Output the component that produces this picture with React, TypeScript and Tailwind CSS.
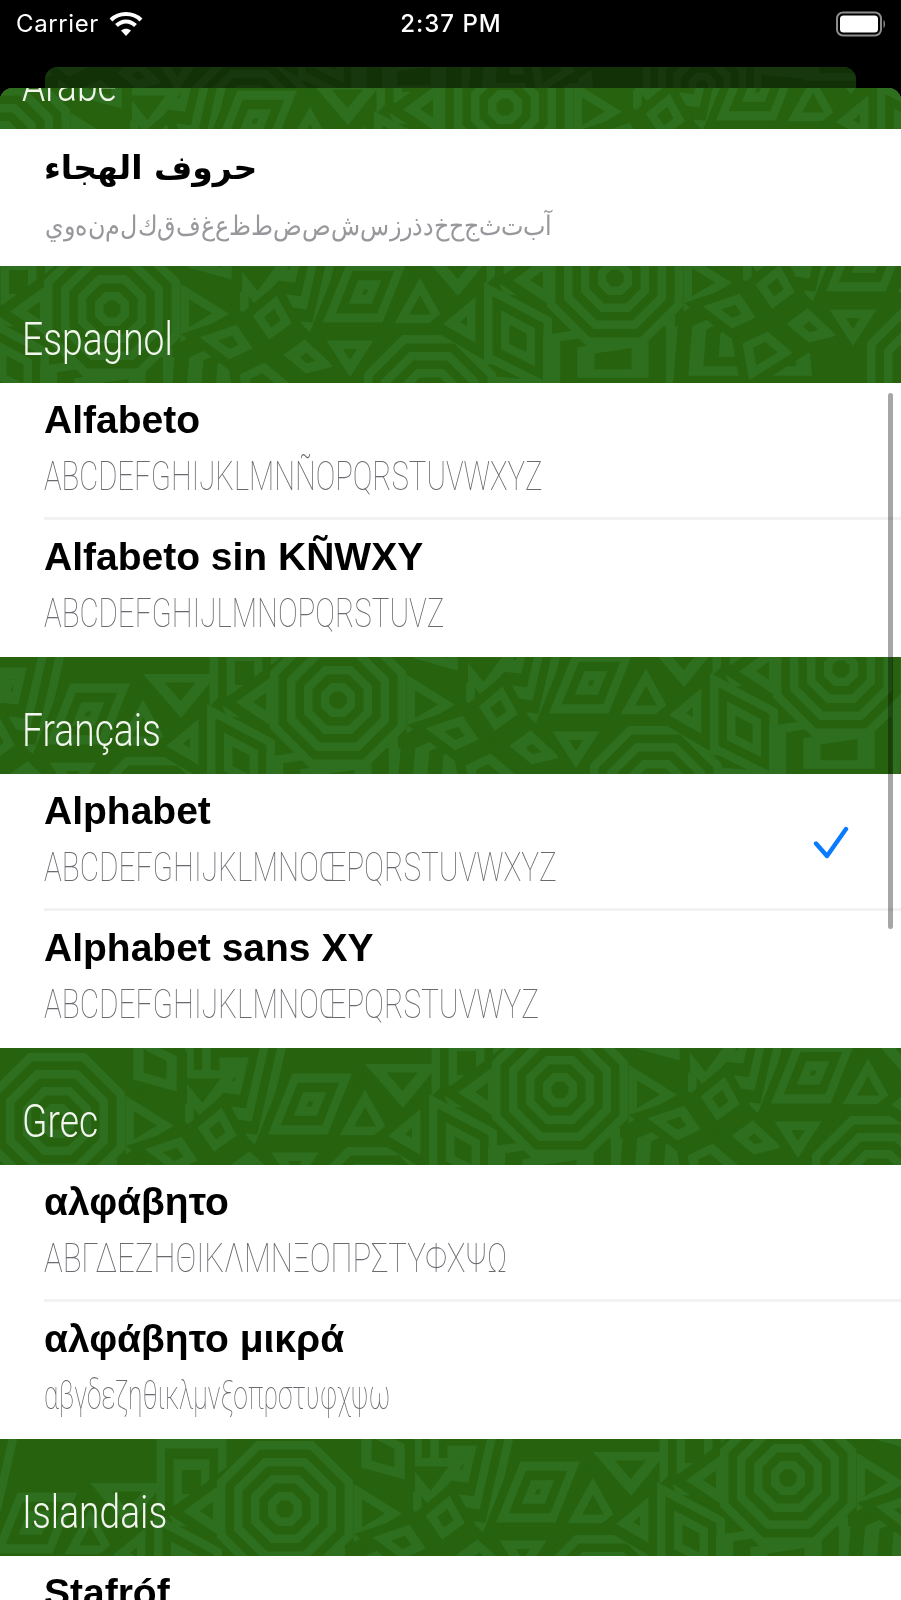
const DARK = "#27620f";
const LIGHT = "#2e6f1f";
const STEP = 8.5;

type Pt = [number, number];

const ARABIC_LETTERS = "آ ب ت ث ج ح خ د ذ ر ز س ش ص ض ط ظ ع غ ف ق ك ل م ن ه و ي".split(" ");

function kite(px: number, py: number, pts: Pt[]): Pt[] {
  return pts.map(([x, y]) => [px + x, py + y] as Pt);
}

function octagon(cx: number, cy: number, r: number): Pt[] {
  const o = r * 0.42;
  return [
    [cx - o, cy - r],
    [cx + o, cy - r],
    [cx + r, cy - o],
    [cx + r, cy + o],
    [cx + o, cy + r],
    [cx - o, cy + r],
    [cx - r, cy + o],
    [cx - r, cy - o],
  ];
}

// one repeat of the tile, in the coordinates of the "Espagnol" band
const TILE: Pt[][] = [
  // fillers behind
  [[240, -70], [350, -70], [318, 70], [240, 60]],
  [[478, -70], [565, -70], [565, 40], [478, 40]],
  [[455, 50], [495, 10], [560, 140], [450, 130]],
  [[40, 100], [180, 80], [180, 160], [40, 160]],
  octagon(430, 135, 66),
  [[175, 88], [240, 60], [318, 70], [325, 150], [170, 150]],
  [[218, -8], [295, -8], [258, 42]],
  [[178, -58], [242, -26], [242, 26], [178, 8]],
  [[172, 2], [172, 92], [246, 48]],
  kite(267, 86, [[0, 0], [38, 32], [-28, 74], [-38, 18]]),
  kite(267, 86, [[0, 0], [36, -26], [86, 20], [38, 32]]),
  kite(267, 86, [[0, 0], [-38, 18], [-86, -18], [-26, -38]]),
  kite(267, 86, [[0, 0], [-26, -38], [12, -70], [36, -26]]),
  [[342, -14], [420, -14], [388, 66], [310, 66]],
  [[420, -6], [380, 66], [460, 66]],
  [[310, 66], [390, 66], [350, 128]],
  [[420, -14], [494, -14], [458, 30]],
  [[426, 60], [484, 12], [484, 94]],
  [[484, 16], [552, 52], [552, 128], [484, 94]],
  [[496, 15], [560, -32], [560, 58]],
  [[546, 84], [610, 60], [610, 136]],
  octagon(112, 43, 68),
];

function Cell({ points }: { points: Pt[] }) {
  const cx = points.reduce((s, p) => s + p[0], 0) / points.length;
  const cy = points.reduce((s, p) => s + p[1], 0) / points.length;
  let inner = Infinity;
  points.forEach((a, i) => {
    const b = points[(i + 1) % points.length];
    const len = Math.hypot(b[0] - a[0], b[1] - a[1]);
    const d = Math.abs((b[0] - a[0]) * (a[1] - cy) - (b[1] - a[1]) * (a[0] - cx)) / len;
    inner = Math.min(inner, d);
  });
  // stripes of a fixed width, counted so that the middle comes out dark
  const m = Math.max(1, Math.floor((inner - 2) / STEP));
  const rings = [];
  for (let i = 0; i <= m; i++) {
    const s = (inner - i * STEP) / inner;
    rings.push(
      <polygon
        key={i}
        points={points.map(([x, y]) => `${cx + (x - cx) * s},${cy + (y - cy) * s}`).join(" ")}
        fill={(m - i) % 2 === 0 ? DARK : LIGHT}
      />
    );
  }
  return <g>{rings}</g>;
}

function Pattern({ dx, dy }: { dx: number; dy: number }) {
  return (
    <svg className="absolute inset-0 h-full w-full" viewBox="0 0 901 117" preserveAspectRatio="xMinYMax slice">
      <rect width="901" height="117" fill={DARK} />
      {[-2, -1, 0, 1, 2].map((k) => (
        <g key={k} transform={`translate(${dx + k * 503} ${dy - k * 31})`}>
          {TILE.map((pts, i) => (
            <Cell key={i} points={pts} />
          ))}
        </g>
      ))}
    </svg>
  );
}

function SectionHeader({ label, dx, dy, first }: { label: string; dx: number; dy: number; first?: boolean }) {
  return (
    <div className={`relative h-[117px] overflow-hidden ${first ? "-mt-[76px]" : ""}`}>
      <Pattern dx={dx} dy={dy} />
      <div className="relative origin-left scale-x-[0.79] pl-[28px] pt-[44px] font-['Roboto',sans-serif] text-[47px] leading-[58px] font-light whitespace-nowrap text-[#f2f6ef]">
        {label}
      </div>
    </div>
  );
}

function Row({
  title,
  sub,
  subClass = "scale-x-[0.745]",
  checked,
  last,
  rtl,
}: {
  title: string;
  sub: string;
  subClass?: string;
  checked?: boolean;
  last?: boolean;
  rtl?: boolean;
}) {
  return (
    <div className="h-[137px] pl-[44px]">
      <div className={`flex h-full items-center justify-between border-b-[3px] pr-[52px] pb-[2px] ${last ? "border-transparent" : "border-[#f2f2f4]"}`}>
        <div className="min-w-0">
          <div
            className={
              rtl
                ? "mt-[5px] font-['DejaVu_Sans',sans-serif] text-[33px] leading-[44px] font-bold whitespace-nowrap text-black"
                : "font-['Liberation_Sans',sans-serif] text-[39px] leading-[44px] font-bold whitespace-nowrap text-black"
            }
          >
            {title}
          </div>
          <div
            className={
              rtl
                ? "mt-[13px] w-[508px] origin-right scale-x-[0.883] font-['DejaVu_Sans',sans-serif] text-[27px] leading-[46px] font-light whitespace-nowrap text-[#98989c]"
                : `mt-[12px] origin-left ${subClass} font-['Roboto',sans-serif] text-[40px] leading-[46px] font-thin whitespace-nowrap text-[#6a6a70]`
            }
            dir={rtl ? "rtl" : undefined}
          >
            {sub}
          </div>
        </div>
        {checked && (
          <svg width="36" height="36" viewBox="0 0 36 36" fill="none" className="mt-[6px] shrink-0">
            <path d="M3 18.5 L14 31 L33 4" stroke="#0a7aff" strokeWidth="4.4" strokeLinecap="round" strokeLinejoin="round" />
          </svg>
        )}
      </div>
    </div>
  );
}

function StatusBar() {
  return (
    <div className="flex h-[48px] items-center justify-between pr-[15px] pl-[16px] font-['Inter',sans-serif] text-[24px] text-white">
      <div className="flex w-[330px] items-center gap-[10px]">
        <span className="tracking-[0.6px]">Carrier</span>
        <svg width="34" height="26" viewBox="0 0 34 26" fill="none">
          <path d="M2 9 C10 1 24 1 32 9" stroke="#fff" strokeWidth="4" />
          <path d="M7.5 14.5 C13 9 21 9 26.5 14.5" stroke="#fff" strokeWidth="4" />
          <path d="M12 19.5 C15 17 19 17 22 19.5 L17 25 Z" fill="#fff" />
        </svg>
      </div>
      <span className="font-medium tracking-[1px]">2:37 PM</span>
      <div className="flex w-[330px] justify-end">
        <svg width="50" height="26" viewBox="0 0 50 26" fill="none">
          <rect x="1" y="1.5" width="44" height="23" rx="6" stroke="#8d8d8d" strokeWidth="2" />
          <rect x="4" y="4.5" width="38" height="17" rx="3.5" fill="#fff" />
          <path d="M47.5 9 C49.5 10 49.5 16 47.5 17 Z" fill="#8d8d8d" />
        </svg>
      </div>
    </div>
  );
}

export default function App() {
  return (
    <div className="relative flex h-[1600px] w-[901px] flex-col overflow-hidden bg-black blur-[0.6px]">
      <StatusBar />
      <div className="h-[19px]" />
      <div className="relative mx-[45px] h-[21px] shrink-0 overflow-hidden rounded-t-[13px] opacity-50">
        <Pattern dx={300} dy={-20} />
      </div>
      <div className="min-h-0 flex-1 overflow-hidden rounded-t-[13px] bg-white">
        <SectionHeader first label="Arabe" dx={393} dy={52} />
        <Row rtl last title="حروف الهجاء" sub={ARABIC_LETTERS.join("\u200c")} />
        <SectionHeader label="Espagnol" dx={0} dy={0} />
        <Row title="Alfabeto" sub="ABCDEFGHIJKLMNÑOPQRSTUVWXYZ" subClass="scale-x-[0.733]" />
        <Row last title="Alfabeto sin KÑWXY" sub="ABCDEFGHIJLMNOPQRSTUVZ" subClass="scale-x-[0.738]" />
        <SectionHeader label="Français" dx={226} dy={0} />
        <Row checked title="Alphabet" sub="ABCDEFGHIJKLMNOŒPQRSTUVWXYZ" />
        <Row last title="Alphabet sans XY" sub="ABCDEFGHIJKLMNOŒPQRSTUVWYZ" />
        <SectionHeader label="Grec" dx={-55} dy={30} />
        <Row title="αλφάβητο" sub="ΑΒΓΔΕΖΗΘΙΚΛΜΝΞΟΠΡΣΤΥΦΧΨΩ" subClass="scale-x-[0.78]" />
        <Row last title="αλφάβητο μικρά" sub="αβγδεζηθικλμνξοπρστυφχψω" subClass="scale-x-[0.66]" />
        <SectionHeader label="Islandais" dx={173} dy={27} />
        <Row title="Stafróf" sub="AÁBDÐEÉFGHIÍJKLMNOÓPRSTUÚVXYÝÞÆÖ" />
      </div>
      <div className="absolute top-[393px] left-[888px] h-[536px] w-[5px] rounded-full bg-black/35" />
    </div>
  );
}
